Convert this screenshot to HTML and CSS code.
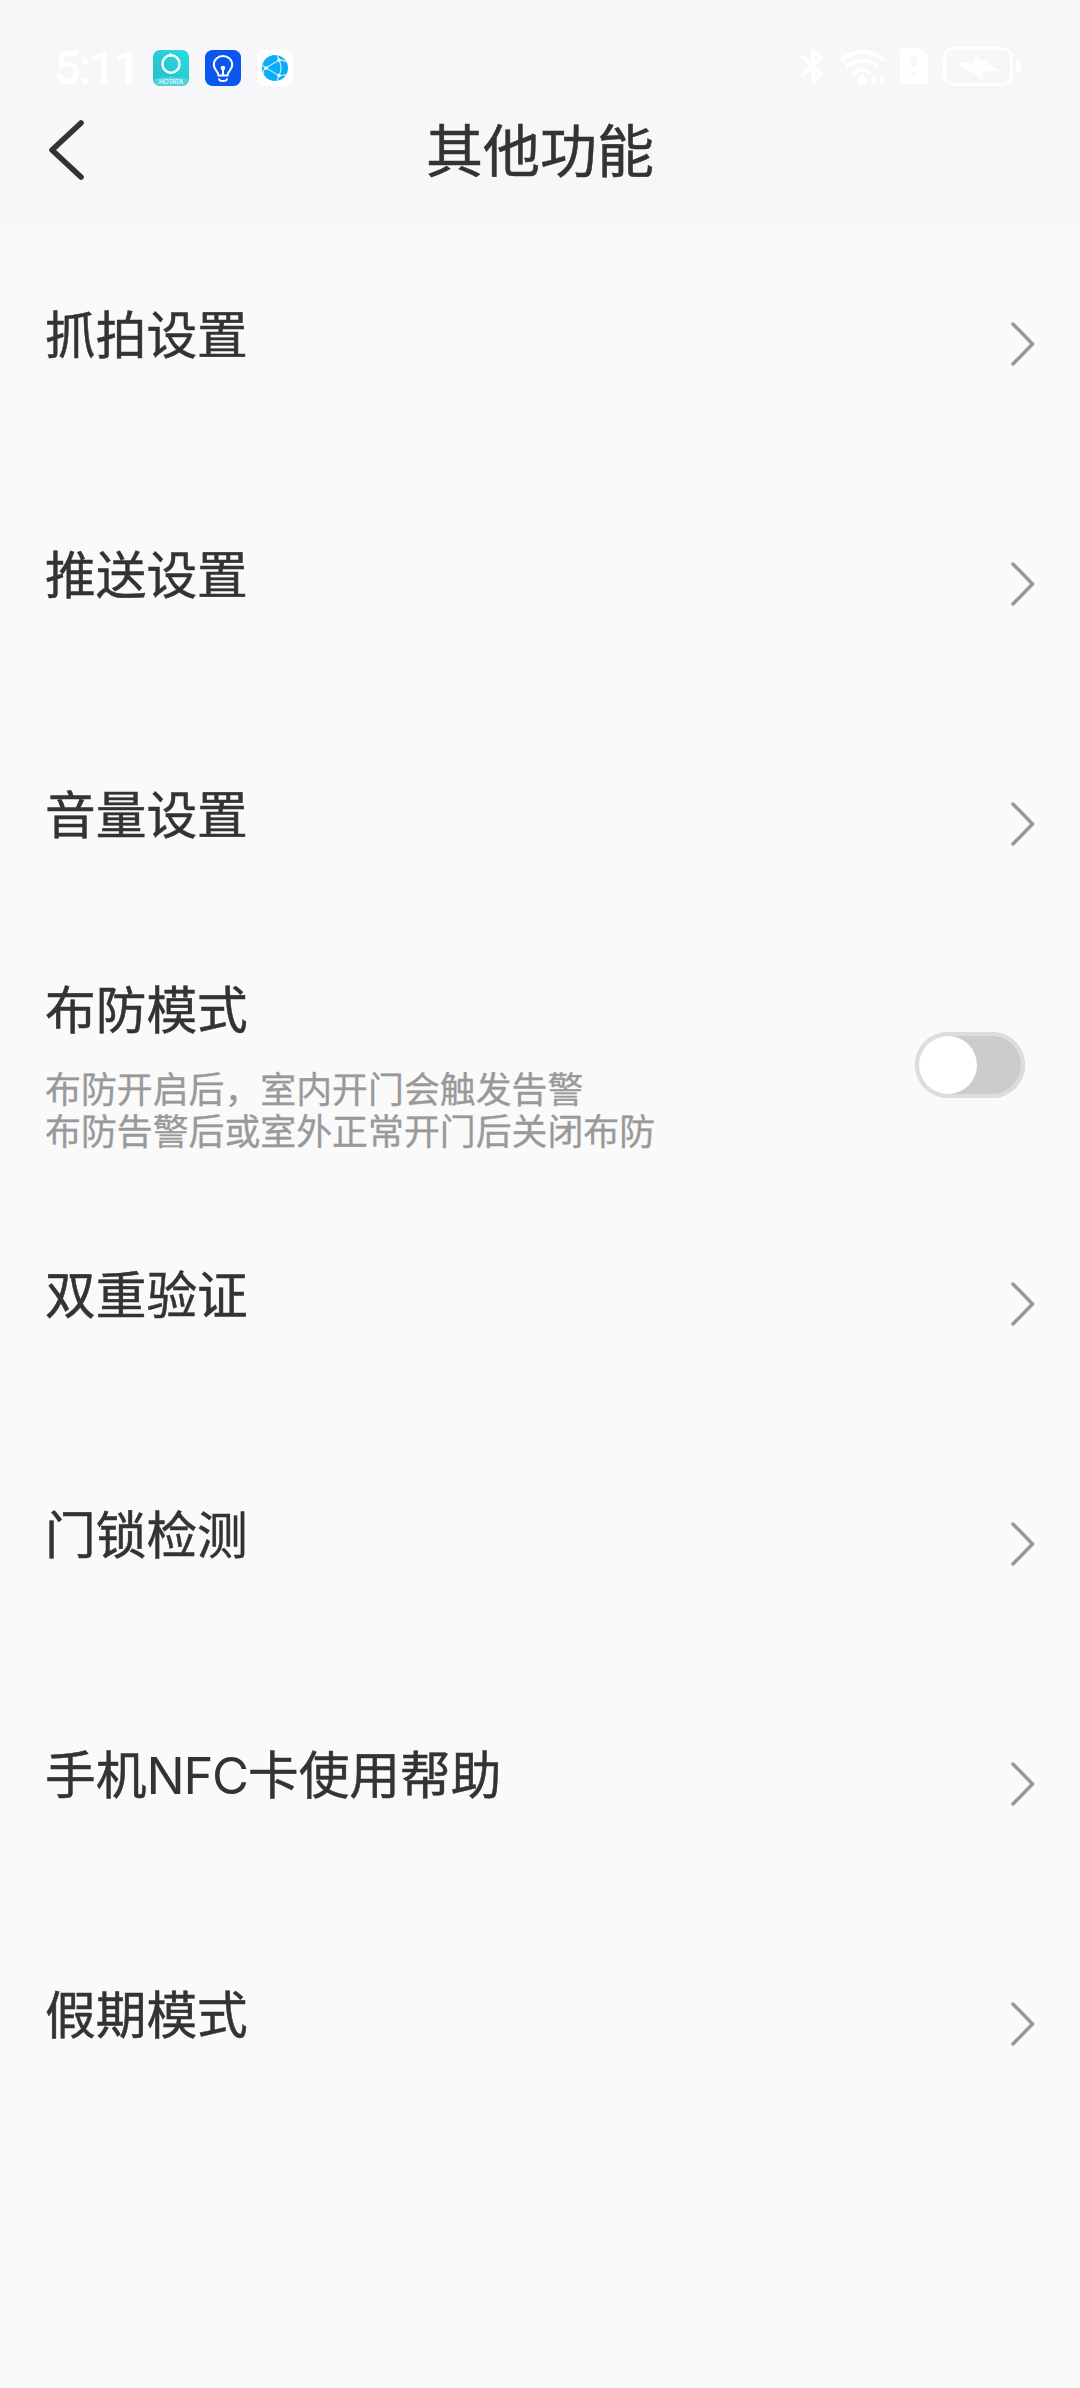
FILE: index.html
```html
<!DOCTYPE html>
<html lang="zh-CN">
<head>
<meta charset="utf-8">
<title>其他功能</title>
<link rel="stylesheet" href="styles.css">
</head>
<body>
<header class="header">
  <div class="status">
    <span class="time">5:11</span>
    <svg class="app" viewBox="0 0 36 36"><defs><linearGradient id="teal" x1="0" y1="1" x2="1" y2="0"><stop offset="0" stop-color="#25bcc9"/><stop offset="1" stop-color="#29dce3"/></linearGradient></defs><rect width="36" height="36" rx="7" fill="url(#teal)"/><path d="M1 29Q18 25 35 29Q35 36 28 36H8Q1 36 1 29Z" fill="#53d4dc"/><ellipse cx="18" cy="14" rx="8.6" ry="8.8" fill="none" stroke="#fff" stroke-width="2.5"/><path d="M17 3.5l2 3" stroke="#fff" stroke-width="2"/><text x="18" y="34" text-anchor="middle" textLength="24" class="brand">HOTATA</text></svg>
    <svg class="app" viewBox="0 0 36 36"><rect width="36" height="36" rx="7.5" fill="#0a56ee"/><path d="M13.5 25.5C13.5 21.5 8.8 20 8.8 14.7C8.8 9.5 13 6 18 6S27.2 9.5 27.2 14.7C27.2 20 22.5 21.5 22.5 25.5ZM14 28.5Q14 31 18 31T22 28.5M18 18V25" fill="none" stroke="#fff" stroke-width="2"/><circle cx="18" cy="18" r="2.3" fill="#fff"/></svg>
    <svg class="app" viewBox="0 0 36 36"><rect width="36" height="36" rx="7" fill="#fff"/><circle cx="18" cy="18" r="13" fill="#0cabf5"/><g fill="none" stroke="#a9edff" stroke-width="1.3"><path d="M22 10L9 18L22 25.5"/><path d="M22 10Q26 18 22 25.5M9 18Q5 16 5.5 14M9 18Q5 21 7 24M22 10L20 5M22 10Q27 10 29 12M22 25.5L20 31M22 25.5Q27 26 30 24"/></g><g fill="#fff"><circle cx="22" cy="10" r="1.8"/><circle cx="9" cy="18" r="1.8"/><circle cx="22" cy="25.5" r="1.8"/></g></svg>
    <svg class="system" viewBox="0 0 220 42"><g fill="none" stroke="#fff" stroke-width="4" stroke-linecap="round" stroke-linejoin="round"><path d="M2 10L20 27L12 34.500V4L20 11L2 28"/><path d="M41 12.500Q61 -3 82 12.500M47 19Q61 8 76 19M54 25.500Q61 20 69 25.500"/><rect x="143.500" y="1.500" width="67" height="36" rx="9" stroke-width="3"/></g><g fill="#fff"><circle cx="61.500" cy="33" r="5"/><path d="M75 28V37L70 33ZM79 28V37L84.500 33Z"/><path fill-rule="evenodd" d="M103 1H119L127.500 9V33Q127.500 37 123 37H103Q99 37 99 33V5Q99 1 103 1ZM110 10V19Q113.200 22 116 19V10Q113 7 110 10Z"/><path d="M155 16H173V8L199 24H181V31Z"/><rect x="215" y="14" width="5" height="12" rx="2.500"/></g><circle cx="113" cy="27" r="2.800" fill="#f7f7f9"/></svg>
  </div>
  <div class="nav">
    <svg class="back" viewBox="0 0 36 60"><path d="M32 3L3 30L32 57" fill="none" stroke="#333" stroke-width="5.600" stroke-linecap="round" stroke-linejoin="round"/></svg>
    <h1 class="title">其他功能</h1>
  </div>
</header>
<main>
  <div class="row"><span class="label">抓拍设置</span><svg class="arrow" viewBox="0 0 24 44"><path d="M2 2L21.500 22L2 42"/></svg></div>
  <div class="row"><span class="label">推送设置</span><svg class="arrow" viewBox="0 0 24 44"><path d="M2 2L21.500 22L2 42"/></svg></div>
  <div class="row"><span class="label">音量设置</span><svg class="arrow" viewBox="0 0 24 44"><path d="M2 2L21.500 22L2 42"/></svg></div>
  <div class="row row-guard"><div class="guard"><span class="label">布防模式</span><p class="note">布防开启后，室内开门会触发告警<br>布防告警后或室外正常开门后关闭布防</p></div><div class="switch"><div class="knob"></div></div></div>
  <div class="row"><span class="label">双重验证</span><svg class="arrow" viewBox="0 0 24 44"><path d="M2 2L21.500 22L2 42"/></svg></div>
  <div class="row"><span class="label">门锁检测</span><svg class="arrow" viewBox="0 0 24 44"><path d="M2 2L21.500 22L2 42"/></svg></div>
  <div class="row"><span class="label">手机<span class="latin">NFC</span>卡使用帮助</span><svg class="arrow" viewBox="0 0 24 44"><path d="M2 2L21.500 22L2 42"/></svg></div>
  <div class="row"><span class="label">假期模式</span><svg class="arrow" viewBox="0 0 24 44"><path d="M2 2L21.500 22L2 42"/></svg></div>
</main>
</body>
</html>
```
FILE: styles.css
```css
* { box-sizing: border-box; }
body { margin: 0; min-height: 2388px; background: #fafafa; color: #333; font-family: "Noto Sans CJK SC", sans-serif; }
svg { display: block; flex: none; overflow: visible; }
.header { height: 225px; background: #f7f7f9; }
.status { display: flex; align-items: center; height: 100px; padding: 36px 59px 0 54px; }
.time { width: 99px; color: #fff; font: 500 47px/60px Roboto, sans-serif; letter-spacing: -2px; }
.app { width: 36px; height: 36px; margin-right: 16px; }
.brand { font: 6.5px "Liberation Sans", sans-serif; fill: #fff; }
.system { width: 220px; height: 42px; margin-left: auto; }
.nav { display: grid; grid-template-columns: 36px 1fr 36px; align-items: center; height: 100px; padding: 0 49px; }
.back { width: 36px; height: 60px; }
.title { margin: 0 0 6px; text-align: center; font-size: 57px; font-weight: 400; line-height: 80px; -webkit-text-stroke: 0.5px #333; }
.row { display: flex; justify-content: space-between; height: 240px; padding: 70px 45px 0 45px; }
.label { display: block; font-size: 50.7px; line-height: 74px; white-space: nowrap; -webkit-text-stroke: 0.5px #333; }
.latin { font-family: Inter, sans-serif; letter-spacing: -1.2px; line-height: 0; -webkit-text-stroke: 0; }
.arrow { width: 24px; height: 44px; margin-top: 27px; fill: none; stroke: #999; stroke-width: 3.5; stroke-linecap: round; stroke-linejoin: round; }
.row-guard { padding: 25px 55px 0 45px; }
.note { margin: 22px 0 0; color: #999; font-size: 35.9px; line-height: 42px; white-space: nowrap; -webkit-text-stroke: 0.3px #999; }
.switch { width: 110px; height: 66px; margin-top: 62px; padding: 4px; border-radius: 33px; background: #ccc; box-shadow: inset 0 0 0 4px #ddd; }
.knob { width: 58px; height: 58px; border-radius: 50%; background: #fff; }
```
